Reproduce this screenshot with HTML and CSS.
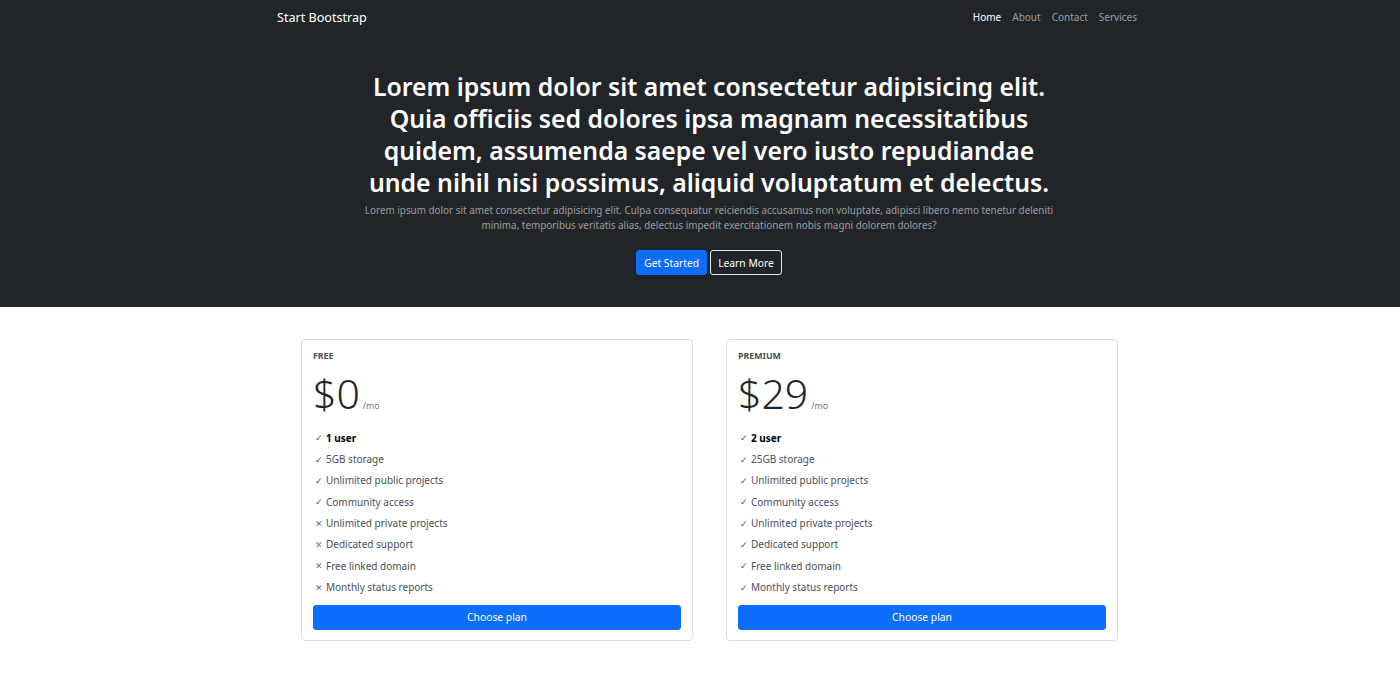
FILE: index.html
```html
<!DOCTYPE html>
<html lang="en">
<head>
<meta charset="utf-8">
<title>Start Bootstrap</title>
<link rel="stylesheet" href="styles.css">
</head>
<body>
<header class="dark">
  <nav class="navbar">
    <a class="brand" href="#">Start Bootstrap</a>
    <ul class="nav-links">
      <li><a class="active" href="#">Home</a></li>
      <li><a href="#">About</a></li>
      <li><a href="#">Contact</a></li>
      <li><a href="#">Services</a></li>
    </ul>
  </nav>
  <section class="hero">
    <h1>Lorem ipsum dolor sit amet consectetur adipisicing elit. Quia officiis sed dolores ipsa magnam necessitatibus quidem, assumenda saepe vel vero iusto repudiandae unde nihil nisi possimus, aliquid voluptatum et delectus.</h1>
    <p class="lead">Lorem ipsum dolor sit amet consectetur adipisicing elit. Culpa consequatur reiciendis accusamus non voluptate, adipisci libero nemo tenetur deleniti minima, temporibus veritatis alias, delectus impedit exercitationem nobis magni dolorem dolores?</p>
    <div class="hero-actions">
      <a class="btn btn-primary" href="#">Get Started</a>
      <a class="btn btn-outline" href="#">Learn More</a>
    </div>
  </section>
</header>
<main class="pricing">
  <div class="card">
    <h6 class="plan">FREE</h6>
    <div class="price"><span class="amount">$0</span><span class="per">/mo</span></div>
    <ul class="features">
      <li class="strong"><span class="ic ok">&#x2713;</span>1 user</li>
      <li><span class="ic ok">&#x2713;</span>5GB storage</li>
      <li><span class="ic ok">&#x2713;</span>Unlimited public projects</li>
      <li><span class="ic ok">&#x2713;</span>Community access</li>
      <li><span class="ic no">&#x2715;</span>Unlimited private projects</li>
      <li><span class="ic no">&#x2715;</span>Dedicated support</li>
      <li><span class="ic no">&#x2715;</span>Free linked domain</li>
      <li><span class="ic no">&#x2715;</span>Monthly status reports</li>
    </ul>
    <a class="btn btn-primary btn-block" href="#">Choose plan</a>
  </div>
  <div class="card">
    <h6 class="plan">PREMIUM</h6>
    <div class="price"><span class="amount">$29</span><span class="per">/mo</span></div>
    <ul class="features">
      <li class="strong"><span class="ic ok">&#x2713;</span>2 user</li>
      <li><span class="ic ok">&#x2713;</span>25GB storage</li>
      <li><span class="ic ok">&#x2713;</span>Unlimited public projects</li>
      <li><span class="ic ok">&#x2713;</span>Community access</li>
      <li><span class="ic ok">&#x2713;</span>Unlimited private projects</li>
      <li><span class="ic ok">&#x2713;</span>Dedicated support</li>
      <li><span class="ic ok">&#x2713;</span>Free linked domain</li>
      <li><span class="ic ok">&#x2713;</span>Monthly status reports</li>
    </ul>
    <a class="btn btn-primary btn-block" href="#">Choose plan</a>
  </div>
</main>
</body>
</html>
```

FILE: styles.css
```css
* { box-sizing: border-box; }
html, body { margin: 0; padding: 0; }
body {
  font-family: "Noto Sans", "Open Sans", sans-serif;
  background: #fff;
  color: #212529;
}
a { text-decoration: none; }

.dark { background: #212529; }

.navbar {
  width: 860px;
  margin-left: calc(50% - 423px);
  height: 35px;
  display: flex;
  align-items: center;
  justify-content: space-between;
}
.brand {
  color: #fff;
  font-size: 12.6px;
  line-height: 16px;
  padding-top: 1px;
}
.nav-links {
  list-style: none;
  margin: 0;
  padding: 0 0 3px;
  display: flex;
  gap: 11px;
  line-height: 16px;
}
.nav-links a {
  color: rgba(255,255,255,.55);
  font-size: 10px;
}
.nav-links a.active { color: #fff; }

.hero {
  width: 700px;
  margin-left: calc(50% - 341px);
  padding: 35px 0 32px;
  text-align: center;
}
.hero h1 {
  margin: 0;
  color: #fff;
  font-size: 24.8px;
  font-weight: 600;
  line-height: 32px;
}
.lead {
  margin: 5px -4px 0;
  font-size: 9.9px;
  line-height: 15px;
  color: rgba(255,255,255,.55);
}
.hero-actions {
  margin-top: 17px;
  display: flex;
  justify-content: center;
  gap: 3px;
}
.btn {
  display: inline-flex;
  align-items: center;
  justify-content: center;
  height: 25px;
  padding: 0 7px;
  font-size: 10.3px;
  border-radius: 3px;
  border: 1px solid transparent;
}
.btn-primary { background: #0d6efd; border-color: #0d6efd; color: #fff; }
.btn-outline { border-color: #e9ecef; color: #fff; background: transparent; }

.pricing {
  width: 817px;
  margin-left: calc(50% - 399px);
  padding: 32px 0 40px;
  display: grid;
  grid-template-columns: 392px 392px;
  column-gap: 33px;
  align-items: start;
}
.card {
  border: 1px solid #dadde0;
  border-radius: 4px;
  padding: 9px 11px 10px;
}
.plan {
  margin: 0;
  font-size: 8.8px;
  font-weight: 700;
  line-height: 14px;
  color: #495057;
}
.price {
  display: flex;
  align-items: baseline;
  height: 62px;
  margin-top: 2px;
}
.amount {
  font-size: 41px;
  font-weight: 300;
  line-height: 56px;
  color: #212529;
}
.per {
  font-size: 8.8px;
  color: #6c757d;
  margin-left: 3px;
}
.features {
  list-style: none;
  margin: 0;
  padding: 0;
}
.features li {
  display: flex;
  align-items: center;
  height: 21.35px;
  font-size: 10px;
  color: #495057;
}
.features li.strong { font-weight: 700; color: #000; }
.ic {
  width: 13px;
  padding-left: 2px;
  font-size: 8.5px;
  font-weight: 400;
  color: #495057;
}
.ic.no { color: #6c757d; }
.btn-block {
  display: flex;
  width: 100%;
  margin-top: 7px;
}
```
